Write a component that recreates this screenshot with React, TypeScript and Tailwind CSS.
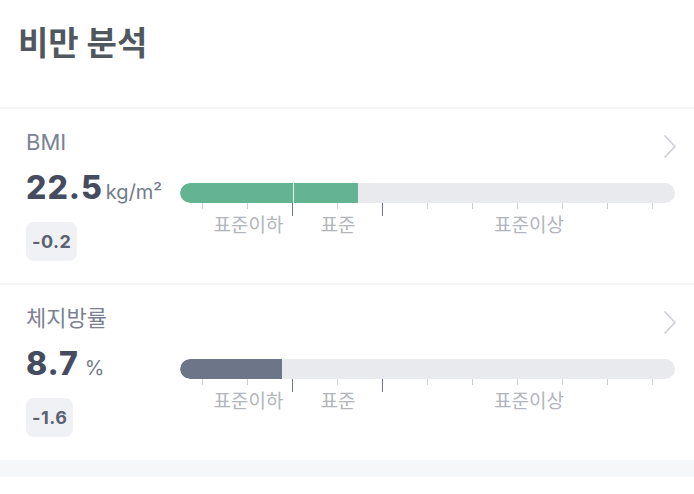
import React from "react";

const KR = { fontFamily: "Inter, 'Noto Sans CJK KR', sans-serif" };

function Chevron() {
  return (
    <svg width="14" height="25" viewBox="0 0 14 25" fill="none">
      <polyline points="2,2 12,12.5 2,23" stroke="#cdd0d5" strokeWidth="1.8" strokeLinecap="round" strokeLinejoin="round" />
    </svg>
  );
}

function Chart({ pct, color, divider }: { pct: number; color: string; divider: boolean }) {
  const ticks = Array.from({ length: 11 }, (_, i) => i);
  return (
    <div className="flex-1 pt-[13px]">
      <div className="relative h-[20px] rounded-full bg-[#e9eaee] overflow-hidden">
        <div className="relative h-full rounded-l-full overflow-hidden" style={{ width: `${pct}%`, backgroundColor: color }}>
          {divider && <div className="absolute top-0 bottom-0 left-[113px] w-px bg-white/80" />}
        </div>
      </div>
      <div className="grid grid-cols-11 h-[13px]">
        {ticks.map((i) => (
          <div key={i} className="flex justify-center">
            {i === 2 || i === 4 ? (
              <div className="w-[1.5px] h-[13px] bg-[#6f7685]" />
            ) : (
              <div className="w-px h-[6px] bg-[#cfd2d7]" />
            )}
          </div>
        ))}
      </div>
      <div className="flex text-[19px] leading-[20px] text-[#b2b5bc]" style={KR}>
        <div className="w-[24px]" />
        <div className="w-[89px] text-center">표준이하</div>
        <div className="w-[90px] text-center">표준</div>
        <div className="flex-1 text-center">표준이상</div>
      </div>
    </div>
  );
}

function Section({
  label,
  value,
  unit,
  diff,
  pct,
  color,
  divider,
  unitGap,
}: {
  label: string;
  value: string;
  unit: string;
  diff: string;
  pct: number;
  color: string;
  divider: boolean;
  unitGap: string;
}) {
  return (
    <div className="h-[174px] pl-[26px] pr-[19px] pt-[19px]">
      <div className="flex items-center justify-between h-[28px]">
        <div className="text-[22px] leading-[28px] text-[#7b8294]" style={KR}>
          {label}
        </div>
        <div className="mr-[-2px] mt-[8px]">
          <Chevron />
        </div>
      </div>
      <div className="flex mt-[14px]">
        <div className="w-[154px]">
          <div className="flex items-baseline h-[36px]">
            <span className="text-[32px] leading-[36px] font-extrabold text-[#454c5f] tracking-[1px]" style={KR}>
              {value}
            </span>
            <span className={`text-[20px] text-[#737a88] ${unitGap}`} style={KR}>
              {unit}
            </span>
          </div>
          <div className="mt-[16px] inline-flex items-center h-[39px] px-[6px] rounded-[8px] bg-[#f0f1f5]">
            <span className="text-[18px] font-bold text-[#5b6271] tracking-[0.5px]" style={KR}>
              {diff}
            </span>
          </div>
        </div>
        <Chart pct={pct} color={color} divider={divider} />
      </div>
    </div>
  );
}

export default function App() {
  return (
    <div className="w-[694px] h-[494px] bg-white overflow-hidden" style={KR}>
      <div className="h-[107px] pl-[18px] pt-[22px]">
        <h1 className="text-[33px] leading-[42px] font-bold text-[#51575f]" style={KR}>
          비만 분석
        </h1>
      </div>
      <div className="h-[2px] bg-[#f3f4f6]" />
      <Section label="BMI" value="22.5" unit="kg/m²" diff="-0.2" pct={36} color="#64b494" divider unitGap="ml-[3px]" />
      <div className="h-[2px] bg-[#f3f4f6]" />
      <Section label="체지방률" value="8.7" unit="%" diff="-1.6" pct={20.6} color="#6d7689" divider={false} unitGap="ml-[6px]" />
      <div className="h-[1px]" />
      <div className="h-[17px] bg-[#f6f7f9]" />
    </div>
  );
}
